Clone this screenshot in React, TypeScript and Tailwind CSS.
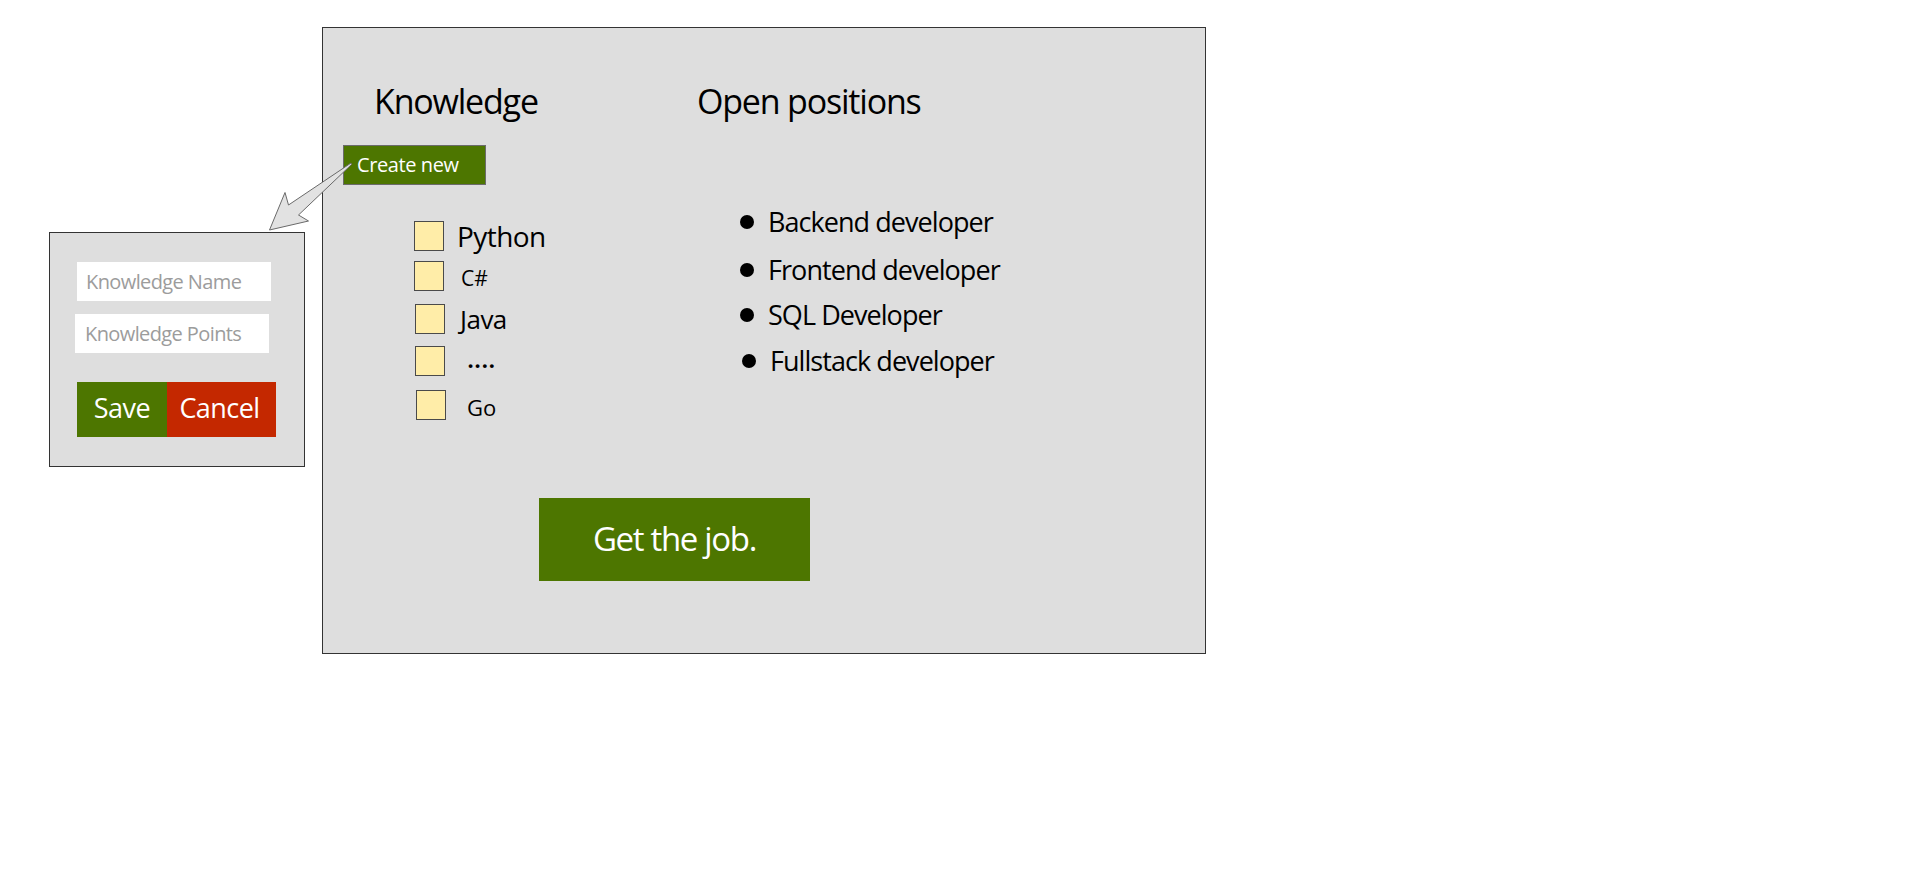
import React from "react";

type Skill = {
  label: string;
  rowClass: string;
  textClass: string;
};

const skills: Skill[] = [
  { label: "Python", rowClass: "ml-0", textClass: "ml-[13px] text-[28px] tracking-[-0.02em]" },
  { label: "C#", rowClass: "mt-[10px] ml-0", textClass: "ml-[17px] mt-[5px] text-[21px]" },
  { label: "Java", rowClass: "mt-[13px] ml-[1px]", textClass: "ml-[15px] text-[26px] tracking-[-0.02em]" },
  { label: "....", rowClass: "mt-[11px] ml-[1px]", textClass: "ml-[22px] mb-[6px] text-[26px] font-semibold" },
  { label: "Go", rowClass: "mt-[13px] ml-[2px]", textClass: "ml-[21px] mt-[4px] text-[22px]" },
];

const positions = [
  { label: "Backend developer", rowClass: "mt-[90px] ml-0" },
  { label: "Frontend developer", rowClass: "mt-[21px] ml-0" },
  { label: "SQL Developer", rowClass: "mt-[18px] ml-0" },
  { label: "Fullstack developer", rowClass: "mt-[19px] ml-[2px]" },
];

function KnowledgePopup() {
  return (
    <div className="mt-[205px] flex h-[235px] w-[256px] shrink-0 flex-col border border-[#333] bg-[#dedede] pt-[29px]">
      <input
        readOnly
        placeholder="Knowledge Name"
        className="ml-[27px] h-[39px] w-[194px] bg-white pl-[9px] text-[20px] tracking-[-0.03em] text-black outline-none placeholder:text-[#9c9c9c]"
      />
      <input
        readOnly
        placeholder="Knowledge Points"
        className="ml-[25px] mt-[13px] h-[39px] w-[194px] bg-white pl-[10px] text-[20px] tracking-[-0.03em] text-black outline-none placeholder:text-[#9c9c9c]"
      />
      <div className="ml-[27px] mt-[29px] flex">
        <button
          type="button"
          className="flex h-[55px] w-[90px] items-center justify-center bg-[#4d7600] pb-[4px] text-[27px] leading-none tracking-[-0.02em] text-white"
        >
          Save
        </button>
        <button
          type="button"
          className="flex h-[55px] w-[109px] items-center justify-center bg-[#c42800] pb-[4px] pr-[4px] text-[27px] leading-none tracking-[-0.02em] text-white"
        >
          Cancel
        </button>
      </div>
    </div>
  );
}

function MainPanel() {
  return (
    <div className="ml-[17px] flex h-[627px] w-[884px] shrink-0 flex-col border border-[#333] bg-[#dedede] pl-[20px] pt-[56px] text-black">
      <div className="flex items-start">
        {/* knowledge column */}
        <div className="flex w-[354px] flex-col items-start">
          <h2 className="ml-[31px] text-[34px] leading-none tracking-[-0.035em]">Knowledge</h2>
          <button
            type="button"
            className="mt-[27px] flex h-[40px] w-[143px] items-center border border-[#6b6b6b] bg-[#4d7600] pl-[13px] text-[20px] leading-none tracking-[-0.02em] text-white"
          >
            Create new
          </button>
          <div className="ml-[71px] mt-[36px] flex flex-col">
            {skills.map((s) => (
              <div key={s.label} className={`flex items-center ${s.rowClass}`}>
                <div className="h-[30px] w-[30px] shrink-0 border border-[#4a4a4a] bg-[#ffeda8]" />
                <span className={`leading-none ${s.textClass}`}>{s.label}</span>
              </div>
            ))}
          </div>
        </div>

        {/* positions column */}
        <div className="flex flex-col items-start">
          <h2 className="text-[34px] leading-none tracking-[-0.035em]">Open positions</h2>
          <div className="ml-[43px] flex flex-col">
            {positions.map((p) => (
              <div key={p.label} className={`flex items-center ${p.rowClass}`}>
                <span className="h-[14px] w-[14px] shrink-0 rounded-full bg-black" />
                <span className="ml-[14px] text-[27px] leading-none tracking-[-0.035em]">{p.label}</span>
              </div>
            ))}
          </div>
        </div>
      </div>

      <button
        type="button"
        className="ml-[196px] mt-[78px] flex h-[83px] w-[271px] items-center justify-center bg-[#4d7600] pb-[2px] text-[33px] leading-none tracking-[-0.04em] text-white"
      >
        Get the job.
      </button>
    </div>
  );
}

export default function App() {
  return (
    <div className="relative flex h-[881px] w-full items-start bg-white pl-[49px] pt-[27px] font-['Open_Sans',sans-serif]">
      <KnowledgePopup />
      <MainPanel />
      {/* callout arrow from "Create new" to the popup */}
      <svg
        className="pointer-events-none absolute left-0 top-0"
        width="400"
        height="260"
        viewBox="0 0 400 260"
      >
        <polygon
          points="351,163 288.5,205 285,192.5 269.5,230 308.5,221 298.5,215 351.5,164.5"
          fill="#e2e2e2"
          stroke="#6a6a6a"
          strokeWidth="1"
          strokeLinejoin="miter"
        />
      </svg>
    </div>
  );
}
